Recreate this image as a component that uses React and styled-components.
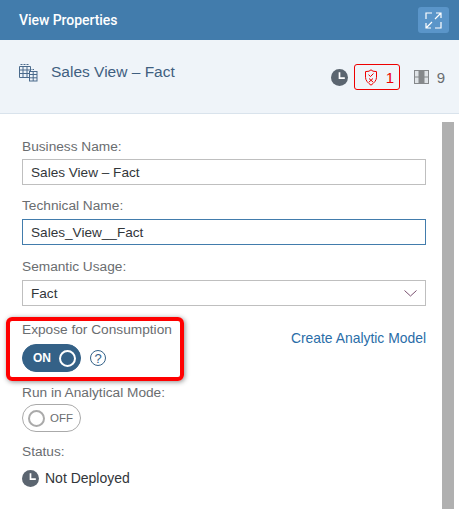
import React from 'react';
import styled, { createGlobalStyle } from 'styled-components';

const GlobalStyle = createGlobalStyle`
    html, body {
        margin: 0;
        padding: 0;
        background: #fff;
    }
    * {
        box-sizing: border-box;
    }
`;

const Panel = styled.div`
    width: 459px;
    height: 509px;
    overflow: hidden;
    font-family: "Liberation Sans", Arial, sans-serif;
    color: #32363a;
    background: #fff;
`;

const TitleBar = styled.div`
    height: 40px;
    background: #427cac;
    display: flex;
    align-items: center;
    justify-content: space-between;
    padding: 0 10px 0 19px;
`;

const Title = styled.div`
    color: #fff;
    font-family: Roboto, "Liberation Sans", sans-serif;
    font-size: 14px;
    font-weight: 500;
    letter-spacing: -0.05px;
`;

const ExpandButton = styled.div`
    width: 31px;
    height: 26px;
    border-radius: 3px;
    background: #5a95c9;
    display: flex;
    align-items: center;
    justify-content: center;
`;

const InfoBar = styled.div`
    height: 74px;
    background: #eff4f9;
    border-bottom: 1px solid #d9e3ec;
    display: flex;
    align-items: flex-start;
    justify-content: space-between;
    padding: 21px 14px 0 19px;
`;

const ViewName = styled.div`
    display: flex;
    align-items: center;
    gap: 13px;
    font-size: 15.5px;
    color: #3f5f80;
    height: 22px;
`;

const Indicators = styled.div`
    display: flex;
    align-items: center;
    margin-top: 3px;
    font-size: 15px;
    color: #6a6d70;
`;

const ErrorBadge = styled.div`
    width: 46px;
    height: 26px;
    margin: 0 14px 0 6px;
    border: 1px solid #e00;
    border-radius: 3px;
    color: #e00;
    display: flex;
    align-items: center;
    gap: 8px;
    padding-left: 9px;
`;

const ColumnCount = styled.div`
    display: flex;
    align-items: center;
    gap: 8px;
`;

const Body = styled.div`
    display: flex;
    height: 395px;
    padding-top: 8px;
`;

const Form = styled.div`
    width: 404px;
    margin-left: 22px;
    padding-top: 15px;
`;

const ScrollTrack = styled.div`
    width: 12px;
    margin-left: 16px;
    background: #b0b0b0;
`;

const Label = styled.div`
    font-size: 13.7px;
    line-height: 20px;
    color: #6a6d70;
`;

const Field = styled.div`
    height: 26px;
    margin: ${(p) => p.$top || 3}px 0 ${(p) => p.$bottom || 11}px;
    padding: 0 8px;
    display: flex;
    align-items: center;
    justify-content: space-between;
    font-size: 13.6px;
    color: #32363a;
    border: 1px solid ${(p) => (p.$focused ? '#427cac' : '#bfbfbf')};
`;

const ExposeRow = styled.div`
    display: flex;
    justify-content: space-between;
    margin-top: 14px;
`;

const ToggleRow = styled.div`
    display: flex;
    align-items: center;
    gap: 9px;
    margin-top: 4px;
`;

const Highlight = styled.div`
    position: absolute;
    left: 6px;
    top: 317px;
    width: 178px;
    height: 64px;
    border: 4px solid #f00;
    border-radius: 6px;
    box-shadow: 1px 1px 5px rgba(0, 0, 0, 0.45);
    pointer-events: none;
`;

const Toggle = styled.div`
    width: 59px;
    height: 28px;
    border-radius: 14px;
    display: flex;
    align-items: center;
    justify-content: space-between;
    font-size: ${(p) => (p.$on ? 12 : 11.5)}px;
    font-weight: ${(p) => (p.$on ? 700 : 400)};
    flex-direction: ${(p) => (p.$on ? 'row' : 'row-reverse')};
    padding: ${(p) => (p.$on ? '0 4px 0 10px' : '0 7px 0 5px')};
    background: ${(p) => (p.$on ? '#346187' : '#fff')};
    color: ${(p) => (p.$on ? '#fff' : '#6a6d70')};
    border: 1px solid ${(p) => (p.$on ? '#346187' : '#aaa')};
`;

const Knob = styled.div`
    width: 17px;
    height: 17px;
    border-radius: 50%;
    border: 2px solid ${(p) => (p.$on ? '#fff' : '#aaa')};
    background: ${(p) => (p.$on ? '#346187' : '#fff')};
`;

const Help = styled.div`
    width: 16px;
    height: 16px;
    border-radius: 50%;
    border: 1px solid #346187;
    color: #346187;
    font-size: 13px;
    line-height: 1;
    display: flex;
    align-items: center;
    justify-content: center;
`;

const ModelLink = styled.div`
    margin-top: 8px;
    font-size: 13.9px;
    line-height: 20px;
    color: #2a6da8;
`;

const AnalyticalLabel = styled(Label)`
    margin-top: 11px;
`;

const OffToggleRow = styled(ToggleRow)`
    margin-top: 1px;
`;

const StatusLabel = styled(Label)`
    margin-top: 10px;
`;

const StatusRow = styled.div`
    display: flex;
    align-items: center;
    gap: 6px;
    margin-top: 6px;
    font-size: 14px;
    line-height: 20px;
    color: #32363a;
`;

function ClockIcon() {
    return (
        <svg width="17" height="17" viewBox="0 0 16 16">
            <circle cx="8" cy="8" r="8" fill="#5b6570" />
            <path d="M8 3v5.500h5" fill="none" stroke="#fff" strokeWidth="1.600" />
        </svg>
    );
}

function ViewIcon() {
    return (
        <svg width="19" height="19" viewBox="0 0 19 19" fill="none" stroke="#4a6a8c" strokeWidth="1">
            <path d="M1.500 1.500h9" strokeDasharray="2 1" />
            <path d="M.5 3.500h11v11H.5zM.5 7h11M.5 10.500h11M4 3.500v11M8 3.500v11" />
            <rect x="10.500" y="8.500" width="7.500" height="9.500" fill="#eff4f9" />
            <path d="M11 6.500h5" strokeDasharray="1.500 1" />
            <path d="M10.500 11.500h7.500M10.500 14.800h7.500M14.200 8.500v9.500" />
        </svg>
    );
}

function ShieldIcon() {
    return (
        <svg width="14" height="17" viewBox="0 0 14 17" fill="none" stroke="#e00" strokeWidth="1">
            <path d="M7 .8l2 1.400 3.500.4v5.700c0 3.200-2.400 5.500-5.500 7.900C3.900 13.800 1.500 11.500 1.500 8.300V2.600L5 2.200z" />
            <path d="M4.500 5.700l2 1.800 3-3M5 9.500l4 3.500M9 9.500l-4 3.500" />
        </svg>
    );
}

function ColumnsIcon() {
    return (
        <svg width="15" height="14" viewBox="0 0 15 14">
            <rect width="15" height="14" fill="#85888b" />
            <path d="M1 1h3.500v5.500H1zM1 7.500h3.500V13H1zM10.500 1H14v5.500h-3.500zM10.500 7.500H14V13h-3.500z" fill="#dfe3e7" />
        </svg>
    );
}

function ExpandIcon() {
    return (
        <svg width="17" height="17" viewBox="0 0 17 17" fill="none" stroke="#fff" strokeWidth="1.200">
            <path d="M11 1h5v5M16 1L10 7M6 16H1v-5M1 16l6-6" />
            <path d="M1 7V1h6M16 10v6h-6" />
        </svg>
    );
}

function ChevronIcon() {
    return (
        <svg width="13" height="7" viewBox="0 0 13 7" fill="none" stroke="#7a4f6f" strokeWidth="1">
            <path d="M.5.5l6 5.500 6-5.500" />
        </svg>
    );
}

export default function App() {
    return (
        <Panel>
            <GlobalStyle />
            <TitleBar>
                <Title>View Properties</Title>
                <ExpandButton>
                    <ExpandIcon />
                </ExpandButton>
            </TitleBar>
            <InfoBar>
                <ViewName>
                    <ViewIcon />
                    Sales View – Fact
                </ViewName>
                <Indicators>
                    <ClockIcon />
                    <ErrorBadge>
                        <ShieldIcon />
                        1
                    </ErrorBadge>
                    <ColumnCount>
                        <ColumnsIcon />
                        9
                    </ColumnCount>
                </Indicators>
            </InfoBar>
            <Body>
                <Form>
                    <Label>Business Name:</Label>
                    <Field $top={2}>Sales View – Fact</Field>
                    <Label>Technical Name:</Label>
                    <Field $bottom={12} $focused>Sales_View__Fact</Field>
                    <Label>Semantic Usage:</Label>
                    <Field $bottom={1}>
                        Fact
                        <ChevronIcon />
                    </Field>
                    <ExposeRow>
                        <div>
                            <Label>Expose for Consumption</Label>
                            <ToggleRow>
                                <Toggle $on>
                                    ON
                                    <Knob $on />
                                </Toggle>
                                <Help>?</Help>
                            </ToggleRow>
                        </div>
                        <ModelLink>Create Analytic Model</ModelLink>
                    </ExposeRow>
                    <AnalyticalLabel>Run in Analytical Mode:</AnalyticalLabel>
                    <OffToggleRow>
                        <Toggle>
                            OFF
                            <Knob />
                        </Toggle>
                    </OffToggleRow>
                    <StatusLabel>Status:</StatusLabel>
                    <StatusRow>
                        <ClockIcon />
                        Not Deployed
                    </StatusRow>
                </Form>
                <ScrollTrack />
            </Body>
            <Highlight />
        </Panel>
    );
}
